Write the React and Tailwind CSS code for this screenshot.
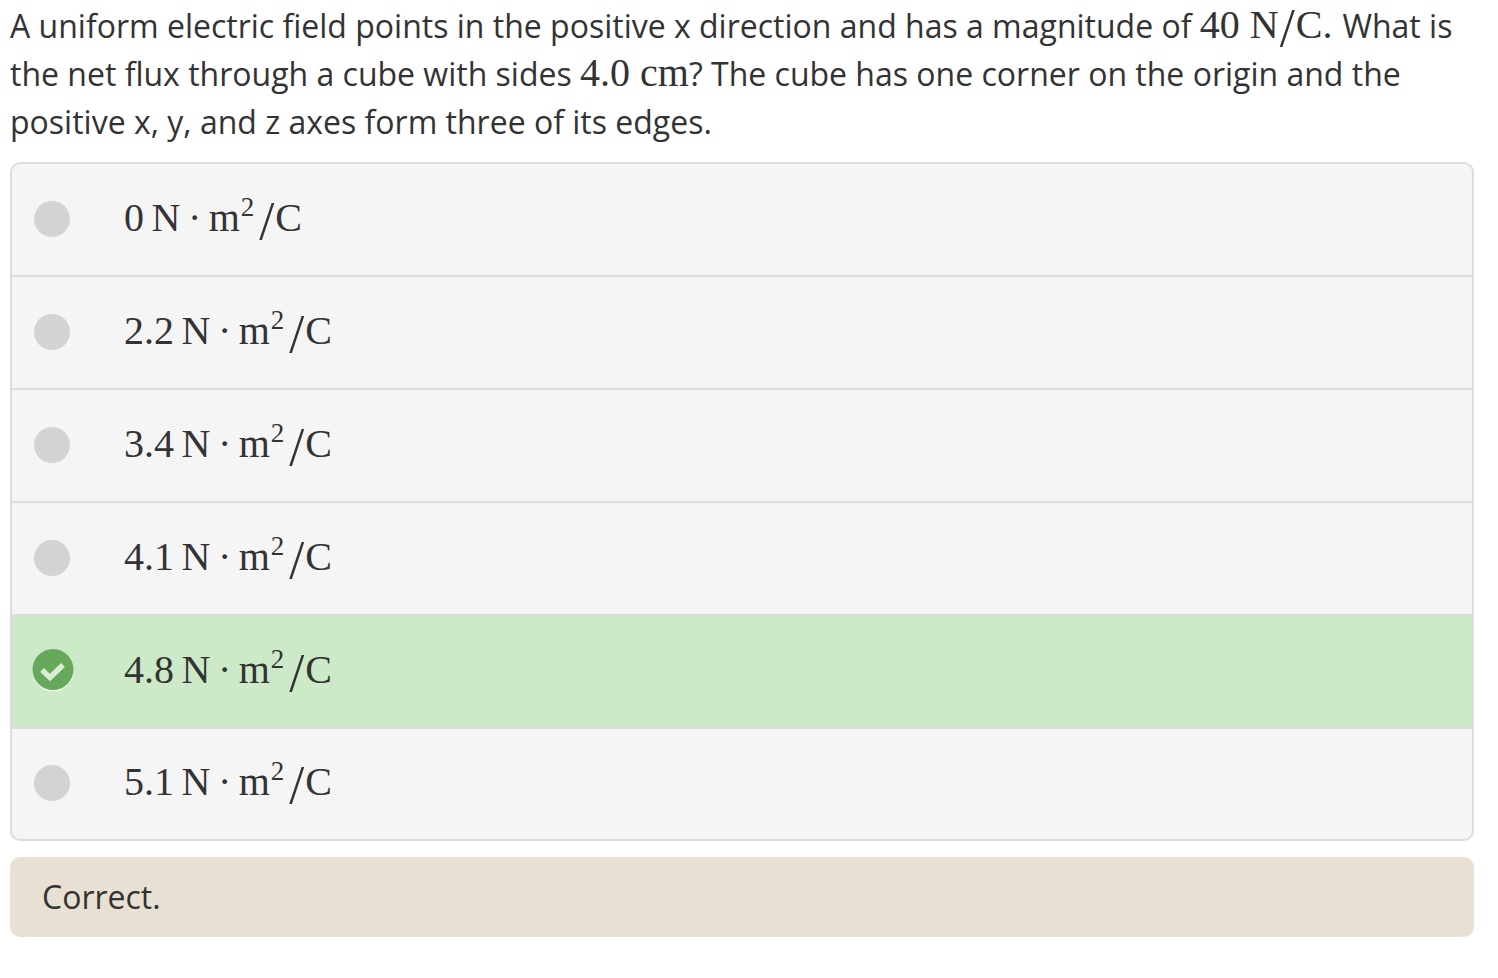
const answers = ["0", "2.2", "3.4", "4.1", "4.8", "5.1"];

function Math({ children, className = "" }) {
  return <span className={`font-['Liberation_Serif',serif] text-[40px] leading-none ${className}`}>{children}</span>;
}

function Slash() {
  return <span className="text-[54px] leading-[0] font-light align-[-8px] mx-[1px]">/</span>;
}

function CheckIcon() {
  return (
    <svg width="42" height="43" viewBox="0 0 42 43" className="block">
      <circle cx="21" cy="22" r="20.5" fill="#f1f8ee" />
      <circle cx="21" cy="20.5" r="20.5" fill="#67a95a" />
      <path d="M10 21l8 7.5 13-12.5" fill="none" stroke="#d9eed3" strokeWidth="5.5" />
    </svg>
  );
}

export default function App() {
  return (
    <main className="min-h-screen bg-white pl-[10px] pt-[2px] text-[#333] font-['Open_Sans',sans-serif] text-[32px] leading-[48px]">
      <div className="w-[1464px]">
        <p>
          A uniform electric field points in the positive x direction and has a magnitude of <Math>40 N<Slash />C.&nbsp;</Math>What is the net flux through a cube with sides <Math>4.0 cm</Math>? The cube has one corner on the origin and the positive x, y, and z axes form three of its edges.
        </p>

        {/* Answers */}
        <ul className="mt-[16px] border-2 border-[#ddd] rounded-[10px] bg-[#f5f5f5] overflow-hidden">
          {answers.map((a) => (
            <li
              key={a}
              className={`h-[113px] flex items-center pl-[22px] pb-[2px] border-t-2 first:border-t-0 first:h-[111px] last:h-[112px] border-[#ddd] ${a === "4.8" ? "bg-[#cdeac8]" : ""}`}
            >
              <div className="w-[90px] shrink-0 flex">
                {a === "4.8" ? (
                  <div className="-ml-[2px]">
                    <CheckIcon />
                  </div>
                ) : (
                  <span className="w-9 h-9 rounded-full bg-[#d3d3d3]" />
                )}
              </div>
              <Math className="mb-[6px] [word-spacing:-2.5px]">
                {a} N · m
                <sup className="static text-[27px] leading-none align-[15px] ml-[1px] pr-[4px]">2</sup>
                <Slash />C
              </Math>
            </li>
          ))}
        </ul>

        <div className="mt-[16px] h-[80px] flex items-center px-[32px] bg-[#e8e1d3] rounded-[10px]">Correct.</div>
      </div>
    </main>
  );
}
